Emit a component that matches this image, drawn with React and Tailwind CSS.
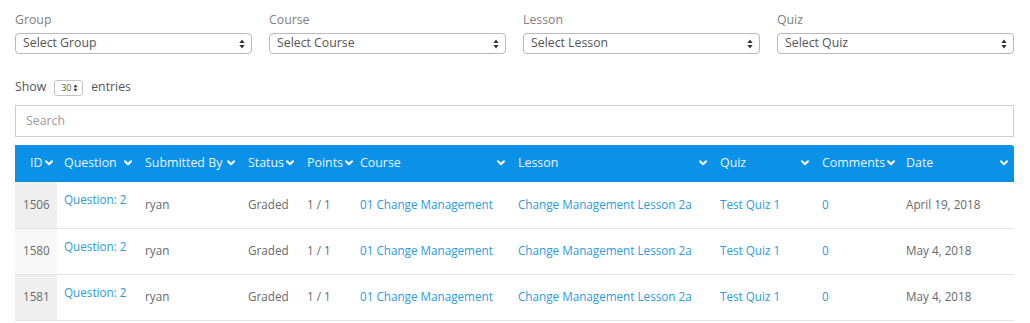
import React from "react";

const font = { fontFamily: '"Open Sans", "Liberation Sans", sans-serif' };

function UpDown({ small }) {
  return (
    <svg width={small ? 5 : 6} height={small ? 8 : 10} viewBox="0 0 6 10" className="shrink-0">
      <path d="M3 0.5 L5.6 4 H0.4 Z" fill="#333" />
      <path d="M3 9.5 L5.6 6 H0.4 Z" fill="#333" />
    </svg>
  );
}

function Chevron() {
  return (
    <svg width="8" height="6" viewBox="0 0 8 6" className="shrink-0">
      <polyline points="1,1.2 4,4.3 7,1.2" fill="none" stroke="#fff" strokeWidth="2" strokeLinecap="round" strokeLinejoin="round" />
    </svg>
  );
}

function Filter({ label, placeholder }) {
  return (
    <div className="flex flex-col">
      <label className="text-[12.3px] leading-[18px] text-[#808080] mt-[11px] mb-[4px]">{label}</label>
      <div className="h-[21px] flex items-center justify-between border border-[#b9b9b9] rounded-[4px] pl-[7px] pr-[6px] bg-white">
        <span className="text-[12.3px] text-[#555]">{placeholder}</span>
        <UpDown />
      </div>
    </div>
  );
}

const columns = [
  { name: "ID", w: "w-[42px]", pad: "pl-[15px] pr-[4px]" },
  { name: "Question", w: "w-[81px]" },
  { name: "Submitted By", w: "w-[103px]" },
  { name: "Status", w: "w-[59px]" },
  { name: "Points", w: "w-[53px]" },
  { name: "Course", w: "w-[158px]" },
  { name: "Lesson", w: "w-[202px]" },
  { name: "Quiz", w: "w-[102px]" },
  { name: "Comments", w: "w-[84px]" },
  { name: "Date", w: "w-[115px]" },
];

const rows = [
  { id: "1506", date: "April 19, 2018", shade: "bg-[#efefef]" },
  { id: "1580", date: "May 4, 2018", shade: "bg-[#f8f8f8]" },
  { id: "1581", date: "May 4, 2018", shade: "bg-[#efefef]" },
];

export default function App() {
  return (
    <div className="w-[1030px] h-[323px] bg-white overflow-hidden px-[15px]" style={font}>
      {/* FILTERS */}
      <div className="grid grid-cols-4 gap-x-[17px] w-[999px]">
        <Filter label="Group" placeholder="Select Group" />
        <Filter label="Course" placeholder="Select Course" />
        <Filter label="Lesson" placeholder="Select Lesson" />
        <Filter label="Quiz" placeholder="Select Quiz" />
      </div>

      {/* SHOW ENTRIES */}
      <div className="flex items-center mt-[25px] h-[17px] text-[12.3px] text-[#555]">
        <span>Show</span>
        <div className="ml-[8px] mr-[8px] h-[16px] w-[29px] flex items-center justify-between border border-[#c4c4c4] rounded-[3px] pl-[6px] pr-[4px]">
          <span className="text-[9px] text-[#555]">30</span>
          <UpDown small />
        </div>
        <span>entries</span>
      </div>

      {/* SEARCH */}
      <div className="mt-[9px] w-[999px] h-[32px] border border-[#cfcfcf] flex items-center pl-[10px]">
        <span className="text-[12.3px] text-[#9a9a9a]">Search</span>
      </div>

      {/* TABLE */}
      <table className="mt-[8px] w-[999px] table-fixed border-collapse">
        <thead>
          <tr className="bg-[#0b91e8] h-[37px]">
            {columns.map((c, i) => (
              <th
                key={c.name}
                className={`${c.w} ${c.pad || "pl-[7px] pr-[6px]"} font-normal text-left text-[12.4px] text-[#eaf5fd] ${i === columns.length - 1 ? "rounded-tr-[3px]" : ""}`}
              >
                <div className="flex items-center justify-between gap-[2px]">
                  <span className="whitespace-nowrap">{c.name}</span>
                  <Chevron />
                </div>
              </th>
            ))}
          </tr>
        </thead>
        <tbody className="text-[11.7px] text-[#6a6a6a]">
          {rows.map((r) => (
            <tr key={r.id} className="h-[46px] border-b border-[#e4e4e4]">
              <td className={`${r.shade} pl-[8px]`}>{r.id}</td>
              <td className="pl-[7px]">
                <span className="inline-block mb-[9px] text-[#2b9be2]">Question: 2</span>
              </td>
              <td className="pl-[7px]">ryan</td>
              <td className="pl-[7px]">Graded</td>
              <td className="pl-[7px]">1 / 1</td>
              <td className="pl-[7px] text-[#2b9be2] whitespace-nowrap">01 Change Management</td>
              <td className="pl-[7px] text-[#2b9be2] whitespace-nowrap">Change Management Lesson 2a</td>
              <td className="pl-[7px] text-[#2b9be2]">Test Quiz 1</td>
              <td className="pl-[7px] text-[#2b9be2]">0</td>
              <td className="pl-[7px] whitespace-nowrap">{r.date}</td>
            </tr>
          ))}
        </tbody>
      </table>
    </div>
  );
}
